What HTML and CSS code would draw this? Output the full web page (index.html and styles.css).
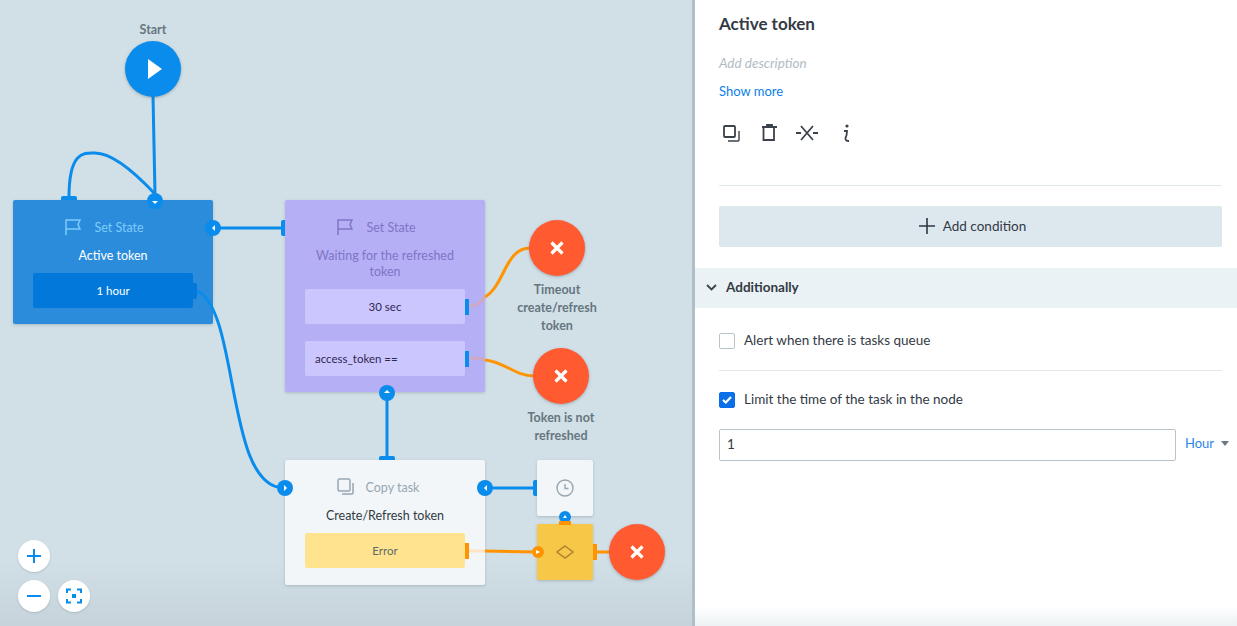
FILE: index.html
```html
<!DOCTYPE html>
<html lang="en">
  <head>
    <meta charset="UTF-8" />
    <title>Active token</title>
    <link rel="stylesheet" href="styles.css">
  </head>
  <body>
    <div class="app">
      <div class="canvas">
        <svg class="wires" width="692" height="626" fill="none" stroke-width="3">
          <g stroke="#0a8cec">
            <path d="M153 96 L155 194" />
            <path d="M69 197 C69 150 85 153 95 153 C115 153 140 178 155 194" />
            <path d="M218 228 H284" />
            <path d="M197 291 C240 310 225 488 284 488" />
            <path d="M387 398 V458" />
            <path d="M490 488 H536" />
          </g>
          <g stroke="#ff9300">
            <path d="M485 297 C505 285 505 248 530 248" />
            <path d="M485 360 C505 362 515 376 534 376" />
            <path d="M485 551 L536 552" />
            <path d="M594 552 H610" />
          </g>
          <g stroke="#cfa8c4">
            <path d="M469 306 C476 306 480 303 485 297" />
            <path d="M469 358 C476 358 480 358 485 360" />
          </g>
          <path d="M469 551 H485" stroke="#fde3c8" />
        </svg>

        <div class="start-label">Start</div>
        <div class="circle start">
          <svg width="16" height="20" viewBox="0 0 16 20"><path d="M1 0 L15 10 L1 20 Z" fill="#fff" /></svg>
        </div>

        <div class="node node-blue">
          <div class="node-head">
            <svg width="18" height="18" viewBox="0 0 18 18" fill="none" stroke="currentColor" stroke-width="1.5"><path d="M3 17 V2 H17 L15 6.5 L17 11 H3" /></svg>
            <span>Set State</span>
          </div>
          <div class="node-name">Active token</div>
          <div class="row row-blue">1 hour</div>
        </div>

        <div class="node node-purple">
          <div class="node-head">
            <svg width="18" height="18" viewBox="0 0 18 18" fill="none" stroke="currentColor" stroke-width="1.5"><path d="M3 17 V2 H17 L15 6.5 L17 11 H3" /></svg>
            <span>Set State</span>
          </div>
          <div class="node-name">Waiting for the refreshed token</div>
          <div class="row row-purple">30 sec</div>
          <div class="row row-purple row-left">access_token ==</div>
        </div>

        <div class="node node-white">
          <div class="node-head">
            <svg width="18" height="18" viewBox="0 0 18 18" fill="none" stroke="currentColor" stroke-width="1.5"><rect x="1" y="1" width="12" height="12" rx="1.5" /><path d="M16 5 V15 Q16 16 15 16 H5" /></svg>
            <span>Copy task</span>
          </div>
          <div class="node-name">Create/Refresh token</div>
          <div class="row row-yellow">Error</div>
        </div>

        <div class="square timer">
          <svg width="18" height="18" viewBox="0 0 18 18" fill="none" stroke="#97a6b1" stroke-width="1.4"><circle cx="9" cy="9" r="8" /><path d="M9 5 V9.5 H12.5" /></svg>
        </div>
        <div class="square gate">
          <svg width="18" height="14" viewBox="0 0 18 14" fill="none" stroke="#ad8430" stroke-width="1.5"><path d="M9 1 L17 7 L9 13 L1 7 Z" /></svg>
        </div>

        <div class="circle stop stop-a">
          <svg width="14" height="14" viewBox="0 0 14 14" stroke="#fff" stroke-width="3.2"><path d="M1.5 1.5 L12.5 12.5 M12.5 1.5 L1.5 12.5" /></svg>
        </div>
        <div class="circle-label label-a">Timeout create/refresh token</div>
        <div class="circle stop stop-b">
          <svg width="14" height="14" viewBox="0 0 14 14" stroke="#fff" stroke-width="3.2"><path d="M1.5 1.5 L12.5 12.5 M12.5 1.5 L1.5 12.5" /></svg>
        </div>
        <div class="circle-label label-b">Token is not refreshed</div>
        <div class="circle stop stop-c">
          <svg width="14" height="14" viewBox="0 0 14 14" stroke="#fff" stroke-width="3.2"><path d="M1.5 1.5 L12.5 12.5 M12.5 1.5 L1.5 12.5" /></svg>
        </div>

        <!-- ports -->
        <div class="tab tab-top p1"></div>
        <div class="tab tab-left p2"></div>
        <div class="tab tab-bar p3"></div>
        <div class="tab tab-bar p4"></div>
        <div class="tab tab-top p5"></div>
        <div class="tab tab-left p6"></div>
        <div class="tab tab-orange p7"></div>
        <div class="tab tab-orange p8"></div>
        <div class="tab tab-flat p9"></div>
        <div class="tab tab-nub p10"></div>

        <div class="port d1"><i class="tri tri-down"></i></div>
        <div class="port d2"><i class="tri tri-left"></i></div>
        <div class="port d3"><i class="tri tri-up"></i></div>
        <div class="port d4"><i class="tri tri-right"></i></div>
        <div class="port d5"><i class="tri tri-left"></i></div>
        <div class="port port-small d6"><i class="tri tri-right"></i></div>
        <div class="port port-half d7"><i class="tri tri-up"></i></div>

        <div class="zoom-btn z1">
          <svg width="16" height="16" viewBox="0 0 16 16" stroke="#0a8cec" stroke-width="2"><path d="M8 1 V15 M1 8 H15" /></svg>
        </div>
        <div class="zoom-btn z2">
          <svg width="16" height="16" viewBox="0 0 16 16" stroke="#0a8cec" stroke-width="2"><path d="M1 8 H15" /></svg>
        </div>
        <div class="zoom-btn z3">
          <svg width="16" height="16" viewBox="0 0 16 16" fill="none" stroke="#0a8cec" stroke-width="2"><path d="M1 5 V1.5 H5 M11 1.5 H15 V5 M15 11 V14.5 H11 M5 14.5 H1 V11" /><rect x="6" y="6" width="4" height="4" fill="#0a8cec" stroke="none" /></svg>
        </div>
      </div>

      <div class="panel">
        <div class="panel-top">
          <h1 class="title">Active token</h1>
          <div class="desc">Add description</div>
          <a class="more">Show more</a>
          <div class="tools">
            <svg width="20" height="20" viewBox="0 0 20 20" fill="none" stroke="#3c424b" stroke-width="1.8"><rect x="3" y="3" width="11" height="11" rx="1" /><path d="M18 8 V17 Q18 18 17 18 H7" stroke-width="1.4" /></svg>
            <svg width="20" height="20" viewBox="0 0 20 20" fill="none" stroke="#3c424b" stroke-width="1.8"><path d="M3 4 H18 M4.5 4 V17 H15 V4 M8 4 V2 H13 V4" /></svg>
            <svg width="24" height="20" viewBox="0 0 24 20" fill="none" stroke="#3c424b" stroke-width="1.8"><path d="M6 3 L18 17 M18 3 L6 17 M1 10 H6 M18 10 H23" /></svg>
            <svg width="20" height="20" viewBox="0 0 20 20" fill="none" stroke="#3c424b" stroke-width="1.8"><circle cx="11" cy="3" r="1.6" fill="#3c424b" stroke="none" /><path d="M8 8 H11 Q11 12 9.5 15 Q9 18 13 18" /></svg>
          </div>
          <div class="rule"></div>
          <button class="add-btn">
            <svg width="16" height="16" viewBox="0 0 16 16" stroke="#2f3640" stroke-width="1.6"><path d="M8 0 V16 M0 8 H16" /></svg>
            Add condition
          </button>
        </div>

        <div class="section-head">
          <svg width="11" height="7" viewBox="0 0 11 7" fill="none" stroke="#3c424b" stroke-width="1.8"><path d="M1 1 L5.5 5.5 L10 1" /></svg>
          Additionally
        </div>

        <div class="section-body">
          <label class="check-row">
            <span class="box"></span>
            Alert when there is tasks queue
          </label>
          <div class="rule rule-2"></div>
          <label class="check-row">
            <span class="box box-on">
              <svg width="10" height="8" viewBox="0 0 10 8" fill="none" stroke="#fff" stroke-width="2.2"><path d="M1 4 L3.8 6.5 L9 1" /></svg>
            </span>
            Limit the time of the task in the node
          </label>
          <div class="limit">
            <div class="field">1</div>
            <a class="unit">Hour</a>
            <i class="caret"></i>
          </div>
        </div>
      </div>
    </div>
  </body>
</html>
```

FILE: styles.css
```css
* {
  box-sizing: border-box;
}
body {
  margin: 0;
  height: 626px;
  overflow: hidden;
  font-family: "Lato", "Noto Sans", sans-serif;
  color: #333a44;
}
.app {
  display: flex;
  height: 626px;
}

/* canvas */
.canvas {
  position: relative;
  width: 692px;
  flex-shrink: 0;
  background: linear-gradient(#d1dfe6 0, #d1dfe6 560px, #c6d3db 626px);
  overflow: hidden;
}
.wires {
  position: absolute;
  left: 0;
  top: 0;
  z-index: 1;
}
.start-label {
  position: absolute;
  left: 113px;
  width: 80px;
  top: 22px;
  text-align: center;
  font-size: 12.5px;
  font-weight: 700;
  line-height: 16px;
  color: #66767f;
}
.circle {
  position: absolute;
  width: 56px;
  height: 56px;
  border-radius: 50%;
  display: flex;
  align-items: center;
  justify-content: center;
  box-shadow: 0 1px 3px rgba(60, 80, 90, 0.35);
  z-index: 2;
}
.start {
  left: 125px;
  top: 41px;
  background: #0a8cec;
  padding-left: 4px;
}
.stop {
  background: #ff5a30;
}
.stop-a { left: 529px; top: 220px; }
.stop-b { left: 533px; top: 348px; }
.stop-c { left: 609px; top: 524px; }
.circle-label {
  position: absolute;
  text-align: center;
  font-size: 12.5px;
  font-weight: 700;
  line-height: 18px;
  color: #66767f;
}
.label-a { left: 514px; top: 281px; width: 86px; }
.label-b { left: 518px; top: 409px; width: 86px; }

.node {
  position: absolute;
  width: 200px;
  border-radius: 2px;
  box-shadow: 0 1px 3px rgba(60, 80, 90, 0.25);
  padding: 16px 20px 0;
  text-align: center;
  font-size: 12.5px;
}
.node-blue { left: 13px; top: 200px; height: 124px; background: #2b8cdb; color: #fff; }
.node-purple { left: 285px; top: 200px; height: 192px; background: #b5aff5; color: #7f75c5; }
.node-white { left: 285px; top: 460px; height: 125px; background: #f2f6f8; color: #333a44; }
.node-head {
  display: flex;
  align-items: center;
  justify-content: center;
  gap: 13px;
  height: 22px;
  padding-right: 19px;
}
.node-blue .node-head { color: #7fcbfb; }
.node-purple .node-head { color: #7f75c5; }
.node-white .node-head { color: #97a6b1; gap: 11px; padding-right: 14px; }
.node-name {
  line-height: 16px;
  margin-top: 10px;
  margin-bottom: 9px;
}
.row {
  height: 35px;
  line-height: 35px;
  border-radius: 2px;
  font-size: 11.5px;
}
.row-blue { background: #0279da; }
.row-purple { background: #ccc6ff; color: #2e2850; margin-bottom: 17px; }
.row-left { text-align: left; padding-left: 10px; }
.row-yellow { background: #ffe38f; color: #5f6a68; }

.square {
  position: absolute;
  left: 537px;
  width: 56px;
  height: 56px;
  border-radius: 2px;
  display: flex;
  align-items: center;
  justify-content: center;
  box-shadow: 0 1px 3px rgba(60, 80, 90, 0.25);
}
.timer { top: 460px; background: #f2f6f8; }
.gate { top: 524px; background: #f7c747; }

/* ports */
.tab {
  position: absolute;
  background: #0a8cec;
  z-index: 2;
}
.tab-top { width: 16px; height: 4px; border-radius: 2px 2px 0 0; }
.tab-left { width: 4px; height: 16px; border-radius: 2px 0 0 2px; }
.tab-bar { width: 4px; height: 16px; }
.tab-orange { width: 4px; height: 16px; background: #ff9300; }
.tab-flat { width: 12px; height: 4px; background: #ff9300; }
.tab-nub { width: 4px; height: 16px; background: #0279da; border-radius: 0 2px 2px 0; }
.p1 { left: 61px; top: 196px; }
.p2 { left: 281px; top: 220px; }
.p3 { left: 465px; top: 299px; }
.p4 { left: 465px; top: 351px; }
.p5 { left: 379px; top: 456px; }
.p6 { left: 533px; top: 480px; }
.p7 { left: 465px; top: 543px; }
.p8 { left: 593px; top: 544px; }
.p9 { left: 559px; top: 521px; z-index: 4; }
.p10 { left: 193px; top: 283px; }

.port {
  position: absolute;
  width: 16px;
  height: 16px;
  border-radius: 50%;
  background: #0a8cec;
  display: flex;
  align-items: center;
  justify-content: center;
  z-index: 3;
}
.tri {
  display: block;
  width: 0;
  height: 0;
  border: 3px solid transparent;
}
.tri-down { border-top-color: #fff; margin-top: 3px; border-width: 3.5px 3.5px 0; }
.tri-up { border-bottom-color: #fff; margin-bottom: 3px; border-width: 0 3.5px 3.5px; }
.tri-left { border-right-color: #fff; border-width: 3.5px 3.5px 3.5px 0; }
.tri-right { border-left-color: #fff; border-width: 3.5px 0 3.5px 3.5px; }
.d1 { left: 147px; top: 193px; }
.d2 { left: 205px; top: 220px; }
.d3 { left: 379px; top: 385px; }
.d4 { left: 277px; top: 480px; }
.d5 { left: 477px; top: 480px; }
.d6 { left: 532px; top: 546px; width: 12px; height: 12px; background: #ff9300; }
.d7 { left: 559px; top: 511px; width: 12px; height: 12px; }
.port-small .tri { border-width: 2.5px 0 2.5px 4px; }
.port-half .tri { border-width: 0 2.5px 3px; margin-bottom: 2px; }

.zoom-btn {
  position: absolute;
  width: 32px;
  height: 32px;
  border-radius: 50%;
  background: #fff;
  display: flex;
  align-items: center;
  justify-content: center;
  box-shadow: 0 1px 2px rgba(60, 80, 90, 0.2);
}
.z1 { left: 18px; top: 540px; }
.z2 { left: 18px; top: 580px; }
.z3 { left: 58px; top: 580px; }

/* right panel */
.panel {
  flex: 1;
  border-left: 3px solid #aebfc8;
  background: #fff;
  font-size: 13.5px;
  position: relative;
}
.panel::after {
  content: "";
  position: absolute;
  left: 0;
  right: 0;
  bottom: 0;
  height: 20px;
  background: linear-gradient(rgba(225, 232, 236, 0), rgba(225, 232, 236, 0.6));
}
.panel-top {
  padding: 0 15px 0 24px;
}
.title {
  margin: 0;
  padding-top: 13px;
  font-size: 17px;
  line-height: 22px;
  font-weight: 700;
}
.desc {
  margin-top: 18px;
  line-height: 20px;
  font-style: italic;
  color: #b0bcc3;
}
.more {
  display: block;
  margin-top: 8px;
  line-height: 20px;
  font-size: 13px;
  color: #0a7fe8;
}
.tools {
  display: flex;
  align-items: center;
  margin-top: 22px;
  height: 20px;
  padding-left: 2px;
}
.tools svg {
  margin-right: 18px;
  flex-shrink: 0;
}
.tools svg:nth-child(3) {
  margin-left: -2px;
  margin-right: 17px;
}
.rule {
  height: 1px;
  background: #e1e8ec;
  margin-top: 42px;
}
.add-btn {
  display: flex;
  align-items: center;
  justify-content: center;
  gap: 8px;
  width: 100%;
  height: 41px;
  margin-top: 20px;
  padding: 0 0 1px 4px;
  border: none;
  border-radius: 2px;
  background: #dde8ee;
  font: inherit;
  color: #333a44;
}
.section-head {
  display: flex;
  align-items: center;
  gap: 9px;
  height: 40px;
  margin-top: 21px;
  padding: 0 0 2px 11px;
  background: #eaf2f5;
  font-weight: 700;
  font-size: 13.5px;
}
.section-body {
  padding: 24px 15px 0 24px;
}
.check-row {
  display: flex;
  align-items: center;
  gap: 9px;
  height: 17px;
  line-height: 17px;
}
.box {
  width: 16px;
  height: 16px;
  border: 1px solid #b9c4ca;
  border-radius: 2px;
  display: flex;
  align-items: center;
  justify-content: center;
}
.box-on {
  background: #0a6fe8;
  border-color: #0a6fe8;
}
.rule-2 {
  margin-top: 21px;
  margin-bottom: 20px;
}
.limit {
  display: flex;
  align-items: center;
  margin-top: 21px;
  margin-right: -8px;
}
.field {
  width: 457px;
  height: 32px;
  line-height: 28px;
  padding-left: 7px;
  border: 1px solid #b9c4ca;
  border-radius: 2px;
}
.unit {
  margin: 0 0 4px 9px;
  font-size: 13px;
  color: #2c86e6;
}
.caret {
  margin: 0 0 3px 7px;
  width: 0;
  height: 0;
  border-style: solid;
  border-width: 5px 4px 0;
  border-color: #6b7a84 transparent transparent;
}
```
